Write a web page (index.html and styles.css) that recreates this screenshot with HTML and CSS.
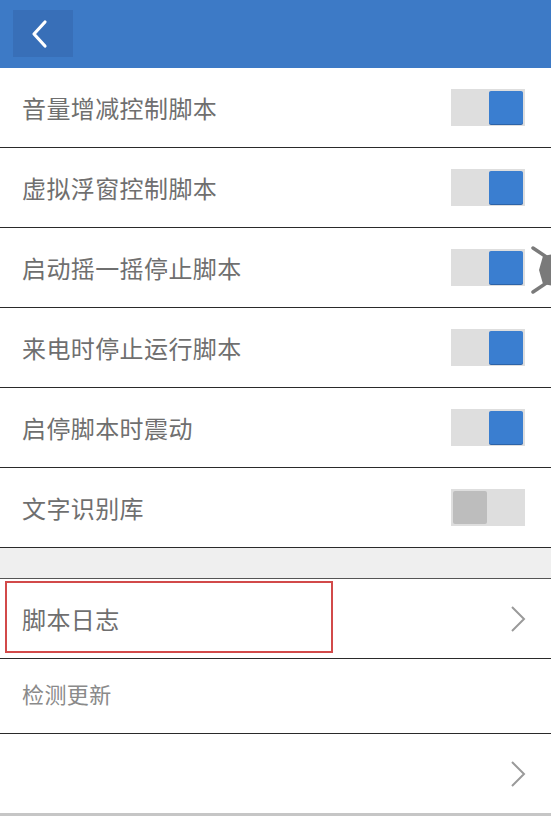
FILE: index.html
```html
<!DOCTYPE html>
<html lang="zh">
<head>
<meta charset="UTF-8" />
<meta name="viewport" content="width=device-width, initial-scale=1" />
<title>设置</title>
<link rel="stylesheet" href="styles.css">
</head>
<body>
  <div class="topbar">
    <div class="back-btn">
      <svg width="20" height="30" viewBox="0 0 20 30">
        <polyline points="15,3 4,15 15,27" fill="none" stroke="#fff" stroke-width="3.2" stroke-linecap="round" stroke-linejoin="round" />
      </svg>
    </div>
  </div>

  <div class="list">
    <div class="row">
      <span class="label">音量增减控制脚本</span>
      <div class="switch on"><div class="knob"></div></div>
    </div>
    <div class="row">
      <span class="label">虚拟浮窗控制脚本</span>
      <div class="switch on"><div class="knob"></div></div>
    </div>
    <div class="row">
      <span class="label">启动摇一摇停止脚本</span>
      <div class="switch on"><div class="knob"></div></div>
    </div>
    <div class="row">
      <span class="label">来电时停止运行脚本</span>
      <div class="switch on"><div class="knob"></div></div>
    </div>
    <div class="row">
      <span class="label">启停脚本时震动</span>
      <div class="switch on"><div class="knob"></div></div>
    </div>
    <div class="row">
      <span class="label">文字识别库</span>
      <div class="switch"><div class="knob"></div></div>
    </div>
  </div>

  <div class="gap"></div>

  <div class="list">
    <div class="row link">
      <div class="highlight"></div>
      <span class="label">脚本日志</span>
      <span class="chevron">
        <svg width="18" height="28" viewBox="0 0 18 28"><polyline points="3,2 15,14 3,26" fill="none" stroke="#9a9a9a" stroke-width="2" /></svg>
      </span>
    </div>
    <div class="row short">
      <span class="label faded">检测更新</span>
    </div>
    <div class="row link last">
      <span class="label blank"></span>
      <span class="chevron">
        <svg width="18" height="28" viewBox="0 0 18 28"><polyline points="3,2 15,14 3,26" fill="none" stroke="#9a9a9a" stroke-width="2" /></svg>
      </span>
    </div>
  </div>
  <div class="bottom"></div>

  <!-- 浮窗按钮，露出在右侧边缘 -->
  <div class="float-icon">
    <svg width="22" height="52" viewBox="0 0 22 52">
      <line x1="2" y1="4" x2="20" y2="16" stroke="#7a7a7a" stroke-width="3.5" stroke-linecap="round" />
      <line x1="2" y1="48" x2="20" y2="36" stroke="#7a7a7a" stroke-width="3.5" stroke-linecap="round" />
      <polygon points="12,12 22,10 22,42 12,40 8,26" fill="#7a7a7a" />
    </svg>
  </div>
</body>
</html>
```

FILE: styles.css
```css
body {
  margin: 0;
  background: #ffffff;
  font-family: "Noto Sans CJK SC", "Noto Sans", sans-serif;
  position: relative;
  width: 551px;
  height: 816px;
  overflow: hidden;
}
.topbar {
  height: 68px;
  background: #3d7ac6;
  padding: 10px 0 0 13px;
  box-sizing: border-box;
}
.back-btn {
  width: 60px;
  height: 47px;
  background: #386fb8;
  display: flex;
  align-items: center;
  justify-content: center;
  padding-right: 6px;
  box-sizing: border-box;
}
.row {
  height: 80px;
  border-bottom: 1px solid #2a2a2a;
  display: flex;
  align-items: center;
  justify-content: space-between;
  padding: 0 26px 0 22px;
  box-sizing: border-box;
  position: relative;
}
.row:first-child {
  height: 80px;
  padding-top: 0;
}
.label {
  font-size: 24px;
  color: #6f6f6f;
  letter-spacing: 0.4px;
}
.switch {
  width: 74px;
  height: 37px;
  background: #dedede;
  display: flex;
  align-items: center;
  padding: 0 2px;
  box-sizing: border-box;
}
.switch .knob {
  width: 34px;
  height: 33px;
  background: #bdbdbd;
  border-radius: 2px;
}
.switch.on {
  justify-content: flex-end;
}
.switch.on .knob {
  background: #3a7ed0;
  box-shadow: 0 1px 0 #2c63a8;
}
.gap {
  height: 30px;
  background: #efefef;
  border-bottom: 1px solid #555;
}
.link {
  padding-right: 24px;
}
.chevron {
  display: flex;
}
.highlight {
  position: absolute;
  left: 5px;
  top: 2px;
  width: 328px;
  height: 72px;
  border: 2px solid #d24a4a;
  box-sizing: border-box;
}
.row.short {
  height: 75px;
  align-items: flex-start;
  padding-top: 18px;
}
.faded {
  color: #8a8a8a;
  font-size: 22px;
}
.row.last {
  border-bottom: none;
  height: 79px;
}
.bottom {
  height: 6px;
  background: #c6c6c6;
}
.float-icon {
  position: absolute;
  left: 531px;
  top: 244px;
}
```
